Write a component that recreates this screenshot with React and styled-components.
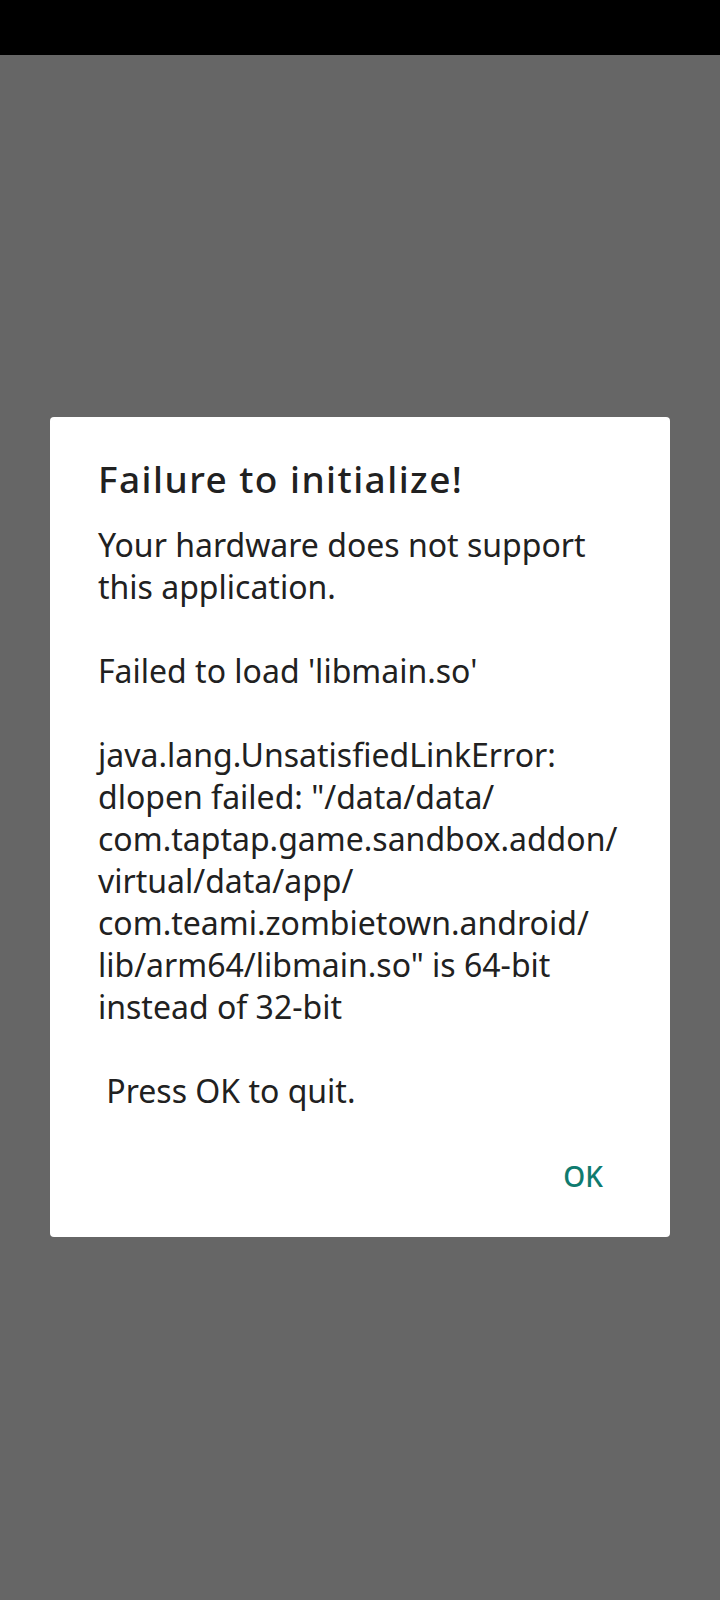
import React from "react";
import styled, { createGlobalStyle } from "styled-components";

const GlobalStyle = createGlobalStyle`
  html, body {
    margin: 0;
    padding: 0;
    background: #666666;
  }
  body {
    font-family: "Noto Sans", "Open Sans", sans-serif;
  }
`;

const Screen = styled.div`
  min-height: 1600px;
  background: #666666;
  display: flex;
  flex-direction: column;
`;

const StatusBar = styled.div`
  height: 55px;
  background: #000000;
  flex: none;
`;

const Dialog = styled.div`
  margin: 362px 50px 0 50px;
  width: 620px;
  box-sizing: border-box;
  background: #ffffff;
  border-radius: 4px;
  padding: 40px 40px 33px 48px;
  display: flex;
  flex-direction: column;
`;

const Title = styled.h1`
  margin: 0;
  font-size: 37px;
  line-height: 44px;
  font-weight: 500;
  letter-spacing: 1.45px;
  color: #212121;
`;

const Message = styled.p`
  margin: 22.6px 0 0 0;
  font-size: 32px;
  line-height: 42px;
  font-weight: 400;
  color: #212121;
  white-space: pre-wrap;
`;

const Actions = styled.div`
  margin-top: 36px;
  margin-right: 9px;
  display: flex;
  justify-content: flex-end;
`;

const TextButton = styled.button`
  border: none;
  background: transparent;
  padding: 10px 18px;
  font-family: "Noto Sans", "Open Sans", sans-serif;
  font-size: 28px;
  line-height: 36px;
  font-weight: 500;
  color: #0f7b6f;
  cursor: pointer;
`;

const message = `Your hardware does not support
this application.

Failed to load 'libmain.so'

java.lang.UnsatisfiedLinkError:
dlopen failed: "/data/data/
com.taptap.game.sandbox.addon/
virtual/data/app/
com.teami.zombietown.android/
lib/arm64/libmain.so" is 64-bit
instead of 32-bit

 Press OK to quit.`;

export default function App() {
  return (
    <>
      <GlobalStyle />
      <Screen>
        <StatusBar />
        <Dialog>
          <Title>Failure to initialize!</Title>
          <Message>{message}</Message>
          <Actions>
            <TextButton>OK</TextButton>
          </Actions>
        </Dialog>
      </Screen>
    </>
  );
}
